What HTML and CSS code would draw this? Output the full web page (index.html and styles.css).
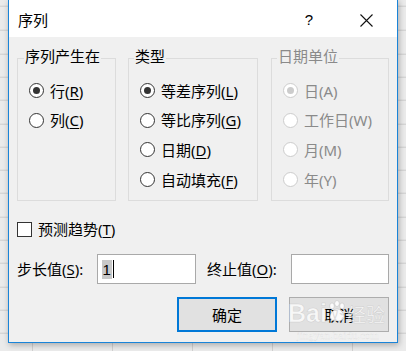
FILE: index.html
```html
<!DOCTYPE html>
<html lang="zh-CN">
<head>
<meta charset="utf-8">
<title>序列</title>
<link rel="stylesheet" href="styles.css">
</head>
<body>
<div class="dialog">
  <div class="titlebar">
    <span class="title">序列</span>
    <span class="help">?</span>
    <svg class="close" width="13" height="13" viewBox="0 0 13 13"><path d="M0.5 0.5L12.5 12.5M12.5 0.5L0.5 12.5" stroke="#111" stroke-width="1.1" fill="none"/></svg>
  </div>
  <div class="content">
    <div class="groups">
      <fieldset class="group g1">
        <legend>序列产生在</legend>
        <div class="opt"><span class="radio on"></span>行(<u>R</u>)</div>
        <div class="opt"><span class="radio"></span>列(<u>C</u>)</div>
      </fieldset>
      <fieldset class="group g2">
        <legend>类型</legend>
        <div class="opt"><span class="radio on"></span>等差序列(<u>L</u>)</div>
        <div class="opt"><span class="radio"></span>等比序列(<u>G</u>)</div>
        <div class="opt"><span class="radio"></span>日期(<u>D</u>)</div>
        <div class="opt"><span class="radio"></span>自动填充(<u>F</u>)</div>
      </fieldset>
      <fieldset class="group g3 disabled">
        <legend>日期单位</legend>
        <div class="opt"><span class="radio on"></span>日(A)</div>
        <div class="opt"><span class="radio"></span>工作日(W)</div>
        <div class="opt"><span class="radio"></span>月(M)</div>
        <div class="opt"><span class="radio"></span>年(Y)</div>
      </fieldset>
    </div>
    <div class="check-row"><span class="checkbox"></span>预测趋势(<u>T</u>)</div>
    <div class="field-row">
      <span class="lbl lbl-step">步长值(<u>S</u>):</span>
      <div class="input in-step"><span class="sel">1</span><span class="caret"></span></div>
      <span class="lbl lbl-stop">终止值(<u>O</u>):</span>
      <div class="input in-stop"></div>
    </div>
    <div class="buttons">
      <div class="btn ok">确定</div>
      <div class="btn cancel">取消</div>
    </div>
  </div>
  <div class="watermark">
    <div class="wm-main"><span class="wm-bai">Bai</span><svg class="wm-paw" width="18" height="22" viewBox="0 0 18 22"><g fill="rgba(255,255,255,0.85)" stroke="rgba(150,150,150,0.35)" stroke-width="0.8"><ellipse cx="4" cy="6" rx="2.3" ry="3"/><ellipse cx="9" cy="3.5" rx="2.3" ry="3"/><ellipse cx="14" cy="6" rx="2.3" ry="3"/><path d="M9 9c-4 0-7 5-7 8 0 3 3 4 7 4s7-1 7-4c0-3-3-8-7-8z"/></g></svg><span class="wm-jy">经验</span></div>
    <div class="wm-url">jingyan.baidu.com</div>
  </div>
</div>
</body>
</html>
```
FILE: styles.css
```css
html, body {
  margin: 0;
  padding: 0;
}
body {
  width: 406px;
  height: 351px;
  overflow: hidden;
  background-color: #ebebeb;
  background-image:
    repeating-linear-gradient(to bottom, transparent 0, transparent 22.3px, #cdcdcd 22.3px, #cdcdcd 23.3px),
    repeating-linear-gradient(to right, transparent 0, transparent 32px, #d0d0d0 32px, #d0d0d0 33px, transparent 33px, transparent 80px);
  background-position: 0 7.7px, 0 0;
  font-family: "Noto Sans", "Noto Sans CJK SC", sans-serif;
  color: #000;
}
.dialog {
  position: relative;
  box-sizing: border-box;
  margin: -1px 0 0 8px;
  width: 390px;
  height: 344px;
  border: 1px solid #1a84d8;
  background: #f0f0f0;
  box-shadow: 1px 2px 6px rgba(0, 0, 0, 0.28);
}
.titlebar {
  height: 37px;
  background: #fff;
  display: flex;
  align-items: center;
  padding: 3px 0 0 9px;
  box-sizing: border-box;
}
.title {
  font-family: "Noto Sans CJK SC", sans-serif;
  font-size: 15px;
  line-height: 20px;
  flex: 1;
}
.help {
  font-family: "Liberation Sans", sans-serif;
  font-size: 15px;
  line-height: 20px;
  margin-right: 47px;
}
.close {
  margin-right: 24px;
}
.content {
  padding: 9px 8px 0 8px;
}
.groups {
  display: flex;
}
.group {
  box-sizing: border-box;
  height: 155px;
  margin: 0;
  padding: 6px 0 0 11px;
  border: 1px solid #dcdcdc;
  min-width: 0;
}
.g1 { width: 99px; }
.g2 { width: 130px; margin-left: 12px; }
.g3 { width: 118px; margin-left: 13px; }
legend {
  font-family: "Noto Sans CJK SC", sans-serif;
  font-size: 15px;
  line-height: 20px;
  padding: 0 1px 4px 1px;
}
.g1 legend { margin-left: -5px; }
.g2 legend { margin-left: -6px; }
.g3 legend { margin-left: -6px; }
.opt {
  display: flex;
  align-items: center;
  height: 29.6px;
  font-size: 15px;
  line-height: 20px;
  white-space: nowrap;
}
.opt u, .check-row u, .lbl u {
  text-decoration-thickness: 1px;
  text-underline-offset: 2px;
}
.radio {
  box-sizing: border-box;
  width: 15px;
  height: 15px;
  border: 1px solid #333;
  border-radius: 50%;
  background: #fff;
  margin-right: 6px;
  display: flex;
  align-items: center;
  justify-content: center;
  flex: none;
}
.radio.on::after {
  content: "";
  width: 7px;
  height: 7px;
  border-radius: 50%;
  background: #333;
}
.disabled legend, .disabled .opt {
  color: #8a8a8a;
}
.disabled .radio {
  border-color: #cccccc;
}
.disabled .radio.on::after {
  background: #cccccc;
}
.check-row {
  display: flex;
  align-items: center;
  height: 20px;
  margin-top: 18px;
  font-size: 15px;
  line-height: 20px;
}
.checkbox {
  box-sizing: border-box;
  width: 15px;
  height: 15px;
  border: 1px solid #333;
  background: #fff;
  margin-right: 6px;
}
.field-row {
  display: flex;
  align-items: center;
  margin-top: 15px;
  height: 30px;
  font-size: 15px;
  line-height: 20px;
}
.lbl { white-space: nowrap; }
.lbl-step { width: 80px; }
.lbl-stop { width: 84px; margin-left: 11px; }
.input {
  box-sizing: border-box;
  height: 30px;
  border: 1px solid #a9a9a9;
  background: #fff;
  display: flex;
  align-items: center;
  padding-left: 4px;
}
.in-step { width: 100px; }
.in-stop { width: 99px; }
.sel {
  background: #c8c8c8;
  font-family: "Liberation Sans", sans-serif;
  font-size: 15px;
  line-height: 19px;
  padding: 0 1px;
}
.caret {
  width: 1px;
  height: 18px;
  background: #000;
  margin-left: 1px;
}
.buttons {
  display: flex;
  justify-content: flex-end;
  gap: 12px;
  margin-top: 13px;
}
.btn {
  box-sizing: border-box;
  width: 100px;
  height: 35px;
  background: #e1e1e1;
  border: 1px solid #adadad;
  display: flex;
  align-items: center;
  justify-content: center;
  font-family: "Noto Sans CJK SC", sans-serif;
  font-size: 15px;
  line-height: 20px;
}
.btn.ok {
  border: 2px solid #0078d7;
}
.watermark {
  position: absolute;
  left: 279px;
  top: 296px;
  width: 100px;
  pointer-events: none;
}
.wm-main {
  display: flex;
  align-items: center;
  height: 34px;
}
.wm-bai {
  font-family: "Liberation Sans", sans-serif;
  font-weight: bold;
  font-size: 25px;
  color: rgba(255, 255, 255, 0.75);
  -webkit-text-stroke: 0.6px rgba(160, 160, 160, 0.35);
}
.wm-paw {
  margin: -4px 1px 0 1px;
}
.wm-jy {
  font-family: "Noto Sans CJK SC", sans-serif;
  font-size: 19px;
  color: rgba(255, 255, 255, 0.75);
  -webkit-text-stroke: 0.5px rgba(160, 160, 160, 0.35);
}
.wm-url {
  font-family: "Liberation Serif", serif;
  font-size: 11px;
  line-height: 10px;
  color: rgba(255, 255, 255, 0.8);
  -webkit-text-stroke: 0.3px rgba(160, 160, 160, 0.3);
  padding-left: 9px;
}
```
